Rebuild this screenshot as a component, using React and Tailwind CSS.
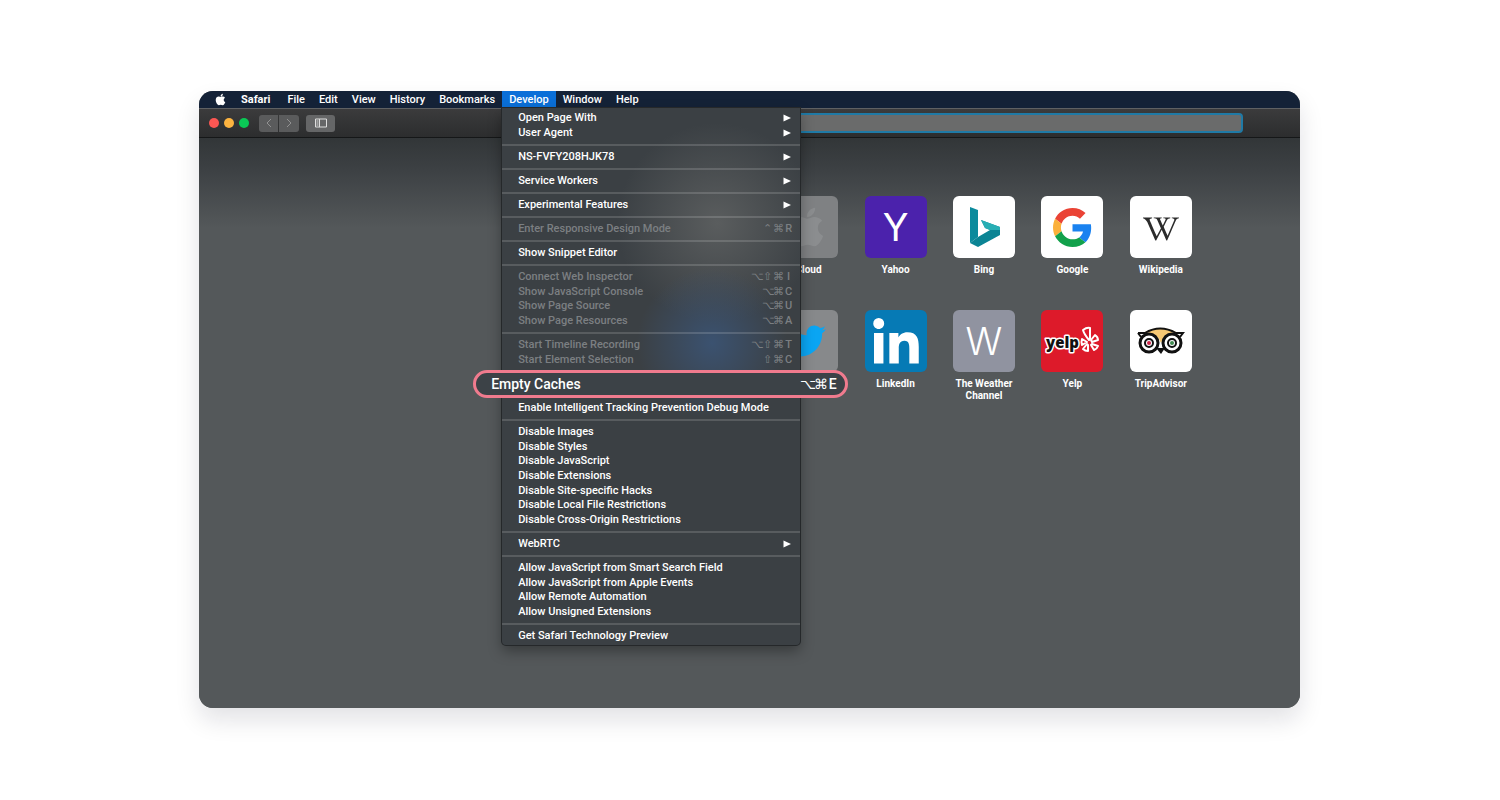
import { FaApple, FaTwitter, FaWikipediaW, FaLinkedinIn } from 'react-icons/fa';

const MENU_BAR = ['File', 'Edit', 'View', 'History', 'Bookmarks', 'Develop', 'Window', 'Help'];

// Each entry is one block of the Develop menu, blocks are split by a separator
const DEVELOP_MENU = [
  {
    height: 'h-[30px]',
    items: [
      { label: 'Open Page With', submenu: true },
      { label: 'User Agent', submenu: true },
    ],
  },
  { height: 'h-[15px]', items: [{ label: 'NS-FVFY208HJK78', submenu: true }] },
  { height: 'h-[15px]', items: [{ label: 'Service Workers', submenu: true }] },
  { height: 'h-[15px]', items: [{ label: 'Experimental Features', submenu: true }] },
  { height: 'h-[15px]', items: [{ label: 'Enter Responsive Design Mode', keys: '⌃⌘R', disabled: true }] },
  { height: 'h-[15px]', items: [{ label: 'Show Snippet Editor' }] },
  {
    height: 'h-[59px]',
    items: [
      { label: 'Connect Web Inspector', keys: '⌥⇧⌘I', disabled: true },
      { label: 'Show JavaScript Console', keys: '⌥⌘C', disabled: true },
      { label: 'Show Page Source', keys: '⌥⌘U', disabled: true },
      { label: 'Show Page Resources', keys: '⌥⌘A', disabled: true },
    ],
  },
  {
    height: 'h-[30px]',
    items: [
      { label: 'Start Timeline Recording', keys: '⌥⇧⌘T', disabled: true },
      { label: 'Start Element Selection', keys: '⇧⌘C', disabled: true },
    ],
  },
  { height: 'h-[15px]', items: [{ label: 'Empty Caches', keys: '⌥⌘E', highlighted: true }] },
  { height: 'h-[15px]', items: [{ label: 'Enable Intelligent Tracking Prevention Debug Mode' }] },
  {
    height: 'h-[103px]',
    items: [
      { label: 'Disable Images' },
      { label: 'Disable Styles' },
      { label: 'Disable JavaScript' },
      { label: 'Disable Extensions' },
      { label: 'Disable Site-specific Hacks' },
      { label: 'Disable Local File Restrictions' },
      { label: 'Disable Cross-Origin Restrictions' },
    ],
  },
  { height: 'h-[15px]', items: [{ label: 'WebRTC', submenu: true }] },
  {
    height: 'h-[59px]',
    items: [
      { label: 'Allow JavaScript from Smart Search Field' },
      { label: 'Allow JavaScript from Apple Events' },
      { label: 'Allow Remote Automation' },
      { label: 'Allow Unsigned Extensions' },
    ],
  },
  { height: 'h-[15px]', items: [{ label: 'Get Safari Technology Preview' }] },
];

function BingLogo() {
  return (
    <svg viewBox="0 0 62 62" className="w-full h-full">
      <path d="M17 11l8 3v27l-8 6z" fill="#0b8a9c" />
      <path d="M17 47l8-6 12-7-5-2-4-8 19 7v8L25 51z" fill="#0b8494" />
      <path d="M28 24l19 7v3l-10 0-5-2z" fill="#27aeb4" />
    </svg>
  );
}

function GoogleLogo() {
  return (
    <svg viewBox="0 0 48 48" className="w-[39px] h-[39px]">
      <path fill="#EA4335" d="M24 9.5c3.54 0 6.71 1.22 9.21 3.6l6.85-6.85C35.9 2.38 30.47 0 24 0 14.62 0 6.51 5.38 2.56 13.22l7.98 6.19C12.43 13.72 17.74 9.5 24 9.5z" />
      <path fill="#1a82f0" d="M46.98 24.55c0-1.57-.15-3.09-.38-4.55H24v9.02h12.94c-.58 2.96-2.26 5.48-4.78 7.18l7.73 6c4.51-4.18 7.09-10.36 7.09-17.65z" />
      <path fill="#FBB03B" d="M10.53 28.59c-.48-1.45-.76-2.99-.76-4.59s.27-3.14.76-4.59l-7.98-6.19C.92 16.46 0 20.12 0 24c0 3.88.92 7.54 2.56 10.78l7.97-6.19z" />
      <path fill="#12a14b" d="M24 48c6.48 0 11.93-2.13 15.89-5.81l-7.73-6c-2.15 1.45-4.92 2.3-8.16 2.3-6.26 0-11.57-4.22-13.47-9.91l-7.98 6.19C6.51 42.62 14.62 48 24 48z" />
    </svg>
  );
}

function YelpLogo() {
  return (
    <svg viewBox="0 0 62 62" className="w-full h-full">
      <g fill="#dd1a2a" stroke="#fff" strokeWidth="2" strokeLinejoin="round">
        <path d="M42 20q4-3 7-2v11l-1 1q-5-6-6-10z" />
        <path d="M50 30l4-5q3 2 3 5l-6 2z" />
        <path d="M51 34l6 2q-1 3-4 4l-3-5z" />
        <path d="M47 35v6q-3 0-5-2l4-5z" />
        <path d="M41 29l5 3-5 3q-1-3 0-6z" />
      </g>
      <text
        x="5"
        y="38"
        fontFamily="Open Sans, sans-serif"
        fontWeight="800"
        fontSize="15"
        fill="#111"
        stroke="#fff"
        strokeWidth="3"
        strokeLinejoin="round"
        paintOrder="stroke"
      >
        yelp
      </text>
    </svg>
  );
}

function TripAdvisorLogo() {
  return (
    <svg viewBox="0 0 62 62" className="w-full h-full">
      <path d="M15 22q15-8 31 0-11 1-15 11-4-10-16-11z" fill="#f7c873" />
      <path d="M8 23h7q15-9 31 0h7l-3 4M8 23l3 4" fill="none" stroke="#111" strokeWidth="2" />
      <circle cx="19" cy="33" r="9" fill="#fff" stroke="#111" strokeWidth="3" />
      <circle cx="42" cy="33" r="9" fill="#fff" stroke="#111" strokeWidth="3" />
      <circle cx="19" cy="33" r="4" fill="#fff" stroke="#111" strokeWidth="2" />
      <circle cx="42" cy="33" r="4" fill="#fff" stroke="#111" strokeWidth="2" />
      <circle cx="19" cy="33" r="2" fill="#d0284c" />
      <circle cx="42" cy="33" r="2" fill="#3f8a50" />
      <path d="M26 38h9l-4 6z" fill="#111" />
    </svg>
  );
}

const FAVORITES = [
  { name: 'iCloud', tile: 'bg-[#7f8183] text-[#8b8d8f]', icon: <FaApple size={44} /> },
  { name: 'Yahoo', tile: 'bg-[#4b22ac] text-white', icon: <span className="font-['Inter'] text-[38px] font-normal">Y</span> },
  { name: 'Bing', tile: 'bg-white', icon: <BingLogo /> },
  { name: 'Google', tile: 'bg-white', icon: <GoogleLogo /> },
  { name: 'Wikipedia', tile: 'bg-white text-[#2c2c2c]', icon: <FaWikipediaW size={36} className="mt-[3px]" /> },
  { name: 'Twitter', iconOnly: true, tile: 'bg-[#87898b] text-[#0aa5f3]', icon: <FaTwitter size={38} /> },
  { name: 'LinkedIn', tile: 'bg-[#067ab5] text-white', icon: <FaLinkedinIn size={52} className="mt-[6px]" /> },
  { name: 'The Weather Channel', tile: 'bg-[#9093a0] text-white', icon: <span className="font-['Inter'] text-[38px] font-light">W</span> },
  { name: 'Yelp', tile: 'bg-[#dd1a2a]', icon: <YelpLogo /> },
  { name: 'TripAdvisor', tile: 'bg-white', icon: <TripAdvisorLogo /> },
];

function Keys({ value, large }) {
  const symbol = large ? 'w-[14px] text-center' : 'w-[11px] text-center';

  return (
    <span className="flex">
      {[...value].map((key, i) => (
        <span key={i} className={i === value.length - 1 ? 'min-w-[9px] text-center' : symbol}>
          {key}
        </span>
      ))}
    </span>
  );
}

function MenuItem({ item }) {
  if (item.highlighted) {
    return (
      <button className="absolute z-10 -left-[29px] -right-[48px] top-1/2 -translate-y-1/2 h-7 pl-[15px] pr-2 flex items-center justify-between rounded-full border-[3px] border-[#f07b8e] bg-[#3c4247] text-[14px] text-white">
        {item.label}
        <Keys value={item.keys} large />
      </button>
    );
  }

  return (
    <button
      disabled={item.disabled}
      className={`w-full min-h-0 flex items-center justify-between pl-4 pr-[7px] text-left ${item.disabled ? 'text-[#7b7f82]' : 'text-white'}`}
    >
      {item.label}
      {item.submenu && (
        <svg viewBox="0 0 8 8" className="w-2 h-2 mr-[2px]" fill="currentColor">
          <path d="M0.500 0.500v7L8 4z" />
        </svg>
      )}
      {item.keys && <Keys value={item.keys} />}
    </button>
  );
}

function DevelopMenu() {
  return (
    <div className="absolute z-20 top-full left-0 w-[298px] py-[2px] rounded-b-[4px] bg-[#3b4044] bg-[radial-gradient(circle_at_210px_235px,#3b5270_0,transparent_75px),radial-gradient(circle_at_215px_115px,#5a5d5e_0,transparent_100px)] shadow-[0_0_0_1px_#25282a,0_6px_14px_rgba(0,0,0,0.35)] text-[11px] leading-none">
      {DEVELOP_MENU.map((group, i) => (
        <div key={i}>
          {i > 0 && <hr className="mt-1 mb-[3px] h-[2px] border-0 bg-white/15" />}
          <div className={`relative grid auto-rows-fr ${group.height}`}>
            {group.items.map((item) => (
              <MenuItem key={item.label} item={item} />
            ))}
          </div>
        </div>
      ))}
    </div>
  );
}

function MenuBar() {
  return (
    <nav className="h-[17px] flex items-stretch pl-[15px] rounded-t-[14px] bg-[#142237] text-[11px] leading-none text-white">
      <button aria-label="Apple" className="w-5 flex items-center">
        <FaApple size={13} />
      </button>
      <button className="mr-[3px] px-[7px] font-bold">Safari</button>
      {MENU_BAR.map((name) => (
        <div key={name} className="relative flex">
          <button className={`px-[7px] ${name === 'Develop' ? 'bg-[#0a6fd8]' : ''}`}>{name}</button>
          {name === 'Develop' && <DevelopMenu />}
        </div>
      ))}
    </nav>
  );
}

function Toolbar() {
  return (
    <div className="h-[30px] flex items-center pl-[10px] pr-[57px] border-t border-t-[#5f6163] border-b border-b-[#151718] bg-linear-to-b from-[#3b3b3c] to-[#2c2d2e]">
      <div className="flex gap-[5px]">
        <span className="w-[10px] h-[10px] rounded-full bg-[#fc5753]" />
        <span className="w-[10px] h-[10px] rounded-full bg-[#fdb440]" />
        <span className="w-[10px] h-[10px] rounded-full bg-[#0ac956]" />
      </div>
      <div className="ml-[10px] flex gap-px text-[#929292]">
        <button aria-label="Back" className="w-[19px] h-[17px] grid place-items-center rounded-l-[3px] bg-[#5a5b5c]">
          <svg viewBox="0 0 8 10" className="w-2 h-[10px]" fill="none" stroke="currentColor">
            <path d="M6 1L2 5l4 4" />
          </svg>
        </button>
        <button aria-label="Forward" className="w-5 h-[17px] grid place-items-center rounded-r-[3px] bg-[#5a5b5c]">
          <svg viewBox="0 0 8 10" className="w-2 h-[10px]" fill="none" stroke="currentColor">
            <path d="M2 1l4 4-4 4" />
          </svg>
        </button>
      </div>
      <button aria-label="Show sidebar" className="ml-[7px] w-[29px] h-[17px] grid place-items-center rounded-[3px] bg-[#656667] text-[#dedede]">
        <svg viewBox="0 0 12 10" className="w-3 h-[10px]" fill="none" stroke="currentColor">
          <path d="M0.500 1h11v8h-11zM4.500 1v8M1.500 3h2M1.500 5h2M1.500 7h2" />
        </svg>
      </button>
      <input
        type="text"
        aria-label="Search or enter website name"
        className="ml-[230px] min-w-0 flex-1 h-5 rounded-[4px] border-2 border-[#1f7aa6] bg-[#6a6b6b] outline-none"
      />
    </div>
  );
}

export default function App() {
  return (
    <div className="min-h-screen bg-white px-[200px] py-[91px] font-['Roboto',sans-serif] font-medium">
      <div className="-ml-px rounded-[14px] bg-[#54585a] shadow-[0_12px_24px_rgba(20,20,40,0.12)]">
        <MenuBar />
        <Toolbar />
        <main className="min-h-[570px] rounded-b-[14px] pt-[58px] bg-[linear-gradient(#323638_0,#3c4043_30px,#54585a_90px)]">
          <div className="ml-auto mr-[95px] w-[442px] grid grid-cols-5">
            {FAVORITES.map((site) => (
              <a
                key={site.name}
                href="#"
                aria-label={site.name}
                className="h-[114px] flex flex-col items-center text-center text-[10px] leading-[12px] font-bold text-white"
              >
                <span className={`w-[62px] h-[62px] mb-[6px] shrink-0 grid place-items-center overflow-hidden rounded-[6px] leading-none ${site.tile}`}>
                  {site.icon}
                </span>
                {!site.iconOnly && site.name}
              </a>
            ))}
          </div>
        </main>
      </div>
    </div>
  );
}
